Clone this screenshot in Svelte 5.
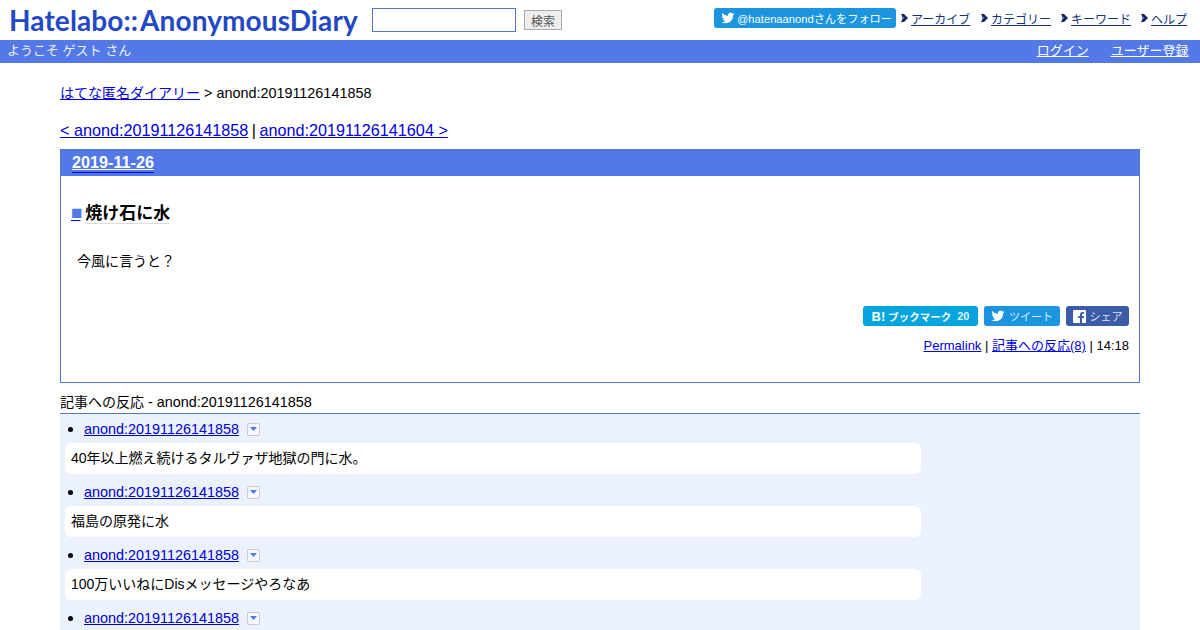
<script>
  const reactions = [
    '40年以上燃え続けるタルヴァザ地獄の門に水。',
    '福島の原発に水',
    '100万いいねにDisメッセージやろなあ',
    ''
  ];
  const navLinks = ['アーカイブ', 'カテゴリー', 'キーワード', 'ヘルプ'];
  const birdPath = 'M23 4.9c-.8.4-1.7.6-2.6.7.9-.6 1.6-1.4 2-2.5-.9.5-1.9.9-2.9 1.1A4.6 4.6 0 0 0 11.700 8.400C7.900 8.200 4.500 6.400 2.300 3.600c-1.200 2.100-.6 4.800 1.400 6.100-.7 0-1.400-.2-2.100-.6 0 2.300 1.600 4.200 3.700 4.600-.7.2-1.400.2-2.100.1.600 1.900 2.300 3.200 4.300 3.200A9.300 9.300 0 0 1 .8 18.900a13 13 0 0 0 20-11.600c.9-.6 1.700-1.400 2.200-2.400z';
</script>

<header class="top">
  <div class="brand">
    <a class="logo" href="#top">Hatelabo<span class="colons">::</span>AnonymousDiary</a>
    <form class="search">
      <input type="text" aria-label="検索語" />
      <button type="button">検索</button>
    </form>
  </div>
  <nav class="top-nav">
    <a class="follow" href="#top">
      <svg width="14" height="14" viewBox="0 0 24 24" fill="#fff"><path d={birdPath} /></svg>
      @hatenaanondさんをフォロー
    </a>
    {#each navLinks as link}
      <span class="nav-item">
        <svg class="arrow" width="7" height="10" viewBox="0 0 7 10">
          <path d="M0 1h3l4 4-4 4H0l2-4z" fill="#16265c" />
          <path d="M1 4h2v2H1z" fill="#5279e7" />
        </svg>
        <a href="#top">{link}</a>
      </span>
    {/each}
  </nav>
</header>

<div class="welcome">
  <span>ようこそ ゲスト さん</span>
  <span class="account">
    <a href="#top">ログイン</a>
    <a href="#top">ユーザー登録</a>
  </span>
</div>

<main>
  <p class="crumbs"><a class="ja" href="#top">はてな匿名ダイアリー</a> &gt; anond:20191126141858</p>
  <p class="pager"><a href="#top">&lt; anond:20191126141858</a> <span class="sep">|</span> <a href="#top">anond:20191126141604 &gt;</a></p>

  <section class="day">
    <h2><a href="#top"><span>2019-11-26</span></a></h2>
    <div class="body">
      <h3><a class="mark" href="#top">■</a> <span class="title">焼け石に水</span></h3>
      <p class="text">今風に言うと？</p>
      <div class="share">
        <a class="btn hatena" href="#top"><b class="b-mark">B!</b><b>ブックマーク</b><b class="count">20</b></a>
        <a class="btn tweet" href="#top">
          <svg width="14" height="14" viewBox="0 0 24 24" fill="#fff"><path d={birdPath} /></svg>
          ツイート
        </a>
        <a class="btn fb" href="#top">
          <svg width="13" height="13" viewBox="0 0 13 13"><rect width="13" height="13" rx="1" fill="#fff" /><path d="M9 13V8h1.700l.3-2H9V4.800c0-.6.2-1 1-1h1.100V2c-.3 0-.9-.1-1.500-.1C8 1.900 7 2.800 7 4.500V6H5.200v2H7v5z" fill="#3b5ca8" /></svg>
          シェア
        </a>
      </div>
      <p class="foot"><a href="#top">Permalink</a> | <a href="#top">記事への反応(8)</a> | 14:18</p>
    </div>
  </section>

  <h4 class="refs-title"><span class="ja">記事への反応</span> - anond:20191126141858</h4>
  <ul class="refs">
    {#each reactions as text}
      <li>
        <a href="#top">anond:20191126141858</a>
        <span class="toggle"><svg width="7" height="4" viewBox="0 0 7 4" fill="#5279e7"><path d="M0 0h7L3.500 4z" /></svg></span>
        {#if text}<div class="bubble">{text}</div>{/if}
      </li>
    {/each}
  </ul>
</main>

<style>
  :global(body) {
    font-family: "Liberation Sans", "Noto Sans CJK JP", sans-serif;
    font-size: 14.4px;
    color: #000;
    background: #fff;
    height: 630px;
    overflow: hidden;
  }

  a {
    color: #0000e0;
  }

  .ja {
    font-size: 14px;
  }

  .top {
    height: 40px;
    display: flex;
    justify-content: space-between;
  }

  .brand {
    display: flex;
    align-items: flex-start;
  }

  .logo {
    font-family: Lato, sans-serif;
    font-weight: 700;
    font-size: 28px;
    letter-spacing: 0.1px;
    line-height: 40px;
    color: #2348c6;
    text-decoration: none;
    margin-left: 9px;
    width: 363px;
    white-space: nowrap;
  }

  .colons {
    margin-right: 2px;
  }

  .search {
    display: flex;
    gap: 8px;
    margin-top: 8px;
  }

  .search input {
    width: 144px;
    height: 24px;
    box-sizing: border-box;
    border: 1px solid #5279c7;
    padding: 0;
  }

  .search button {
    width: 38px;
    height: 20px;
    margin-top: 2px;
    box-sizing: border-box;
    border: 1px solid #aaa;
    background: #eee;
    color: #555;
    font: 12px "Liberation Sans", "Noto Sans CJK JP", sans-serif;
    padding: 0;
  }

  .top-nav {
    display: flex;
    align-items: flex-start;
    padding: 8px 13px 0 0;
    font-size: 12px;
  }

  .follow {
    display: flex;
    align-items: center;
    gap: 2px;
    box-sizing: border-box;
    height: 20px;
    width: 182px;
    padding-left: 7px;
    background: #1b95e0;
    border-radius: 3px;
    color: #fff;
    font-size: 11.2px;
    text-decoration: none;
    white-space: nowrap;
  }

  .nav-item {
    display: flex;
    align-items: center;
    gap: 3px;
    height: 20px;
    margin-left: 10px;
  }

  .nav-item:first-of-type {
    margin-left: 5px;
  }

  .nav-item a {
    color: #13337a;
    width: 60px;
    white-space: nowrap;
  }

  .nav-item:last-child a {
    width: 36px;
  }

  .welcome {
    height: 23px;
    background: #5279e7;
    color: #f0f0f0;
    font-size: 13px;
    line-height: 22px;
    display: flex;
    justify-content: space-between;
    padding: 0 11.5px 0 7px;
  }

  .account {
    display: flex;
    gap: 22px;
  }

  .account a {
    color: #fff;
  }

  main {
    padding: 0 60px;
  }

  .crumbs {
    margin: 0;
    padding-top: 21px;
    line-height: 18px;
  }

  .pager {
    margin: 0;
    padding-top: 18px;
    font-size: 16.2px;
    line-height: 20px;
  }

  .sep {
    margin: 0 -1px;
  }

  .day {
    margin-top: 9px;
    border: 1px solid #5279c7;
    height: 234px;
    box-sizing: border-box;
  }

  .day h2 {
    margin: 0;
    height: 26px;
    background: #5279e7;
    padding-left: 11px;
    font-size: 16.2px;
    line-height: 25px;
  }

  .day h2 a {
    display: inline-block;
    height: 22px;
    border-bottom: 1px solid #0000e0;
    text-decoration: none;
  }

  .day h2 span {
    color: #fff;
    text-decoration: underline;
  }

  .body {
    padding: 0 10px 0 11px;
  }

  .body h3 {
    margin: 24px 0 0;
    font-size: 17px;
    line-height: 26px;
    font-weight: 700;
  }

  .mark {
    color: #5279e7;
    text-decoration-color: #0000e0;
    font-size: 19px;
    letter-spacing: -2px;
    margin-left: -1px;
  }

  .title {
    border-bottom: 1px solid #ddd;
  }

  .text {
    margin: 24px 0 0 5px;
    font-size: 14px;
    line-height: 20px;
  }

  .share {
    display: flex;
    justify-content: flex-end;
    gap: 6px;
    margin-top: 35px;
  }

  .btn {
    display: flex;
    align-items: center;
    justify-content: center;
    gap: 4px;
    height: 20px;
    box-sizing: border-box;
    border-radius: 3px;
    color: rgba(255, 255, 255, 0.85);
    font-size: 11px;
    text-decoration: none;
  }

  .hatena {
    width: 115px;
    background: #00a4de;
    gap: 3px;
    color: #fff;
    font-size: 10.5px;
  }

  .b-mark {
    font-size: 13px;
    font-family: "Liberation Sans", sans-serif;
  }

  .count {
    margin-left: 3px;
    color: rgba(255, 255, 255, 0.9);
    font-size: 11px;
  }

  .tweet {
    width: 76px;
    background: #1b95e0;
  }

  .fb {
    width: 63px;
    background: #3b5ca8;
  }

  .foot {
    margin: 11px 0 0;
    text-align: right;
    font-size: 13px;
    line-height: 18px;
  }

  .refs-title {
    margin: 9px 0 0;
    font-size: 14.4px;
    font-weight: 400;
    line-height: 21px;
    border-bottom: 1px solid #5279c7;
  }

  .refs {
    margin: 0;
    padding: 0 0 0 24px;
    background: #ebf1fd;
    width: 1056px;
  }

  .refs li {
    height: 63px;
    padding-top: 5px;
    box-sizing: border-box;
    line-height: 20px;
  }

  .refs li::marker {
    font-size: 16px;
  }

  .refs li > a {
    color: #0000cc;
  }

  .toggle {
    display: inline-flex;
    align-items: center;
    justify-content: center;
    width: 13px;
    height: 13px;
    box-sizing: border-box;
    border: 1px solid #ccc;
    border-radius: 2px;
    background: #f6f8fe;
    margin-left: 4px;
    vertical-align: 3px;
  }

  .bubble {
    margin: 4px 0 0 -19px;
    width: 856px;
    height: 31px;
    padding-left: 6px;
    box-sizing: border-box;
    background: #fff;
    border-radius: 6px;
    font-size: 14px;
    line-height: 30px;
  }
</style>
